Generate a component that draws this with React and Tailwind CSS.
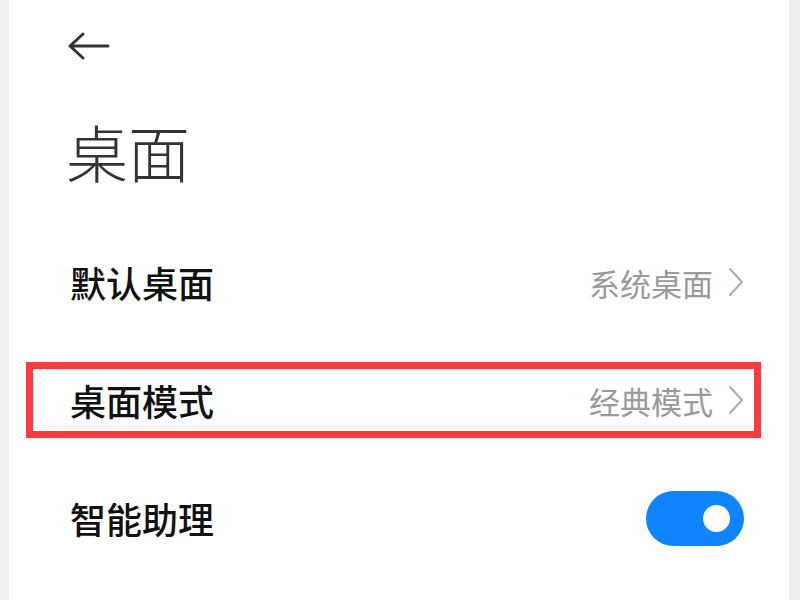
import React, { useState } from 'react';

const cjk = { fontFamily: '"Noto Sans CJK SC", "Noto Sans", sans-serif' };

function Chevron() {
  return (
    <svg width="16" height="30" viewBox="0 0 16 30" className="ml-[15px]">
      <polyline points="2,2 14,15 2,28" fill="none" stroke="#ababab" strokeWidth="2" strokeLinecap="round" strokeLinejoin="round" />
    </svg>
  );
}

function Row({ label, value, marked, children }) {
  return (
    <div
      className={
        'ml-[17px] w-[735px] h-[76px] flex items-center justify-between pl-[37px] pr-[10px] border-[7px] ' +
        (marked ? 'border-[#fb3b3d]' : 'border-transparent')
      }
    >
      <span className="text-[36px] leading-none font-medium text-[#111]">{label}</span>
      {children ? children : (
        <div className="flex items-center">
          <span className="text-[31px] leading-none text-[#9a9a9a]">{value}</span>
          <Chevron />
        </div>
      )}
    </div>
  );
}

export default function App() {
  const [on, setOn] = useState(true);

  return (
    <div className="w-[800px] h-[600px] flex overflow-hidden bg-white" style={cjk}>
      <div className="w-[9px] bg-[#f0f0f0]" />
      <div className="flex-1 flex flex-col bg-white">
        <div className="pt-[32px] pl-[59px]">
          <svg width="42" height="28" viewBox="0 0 42 28">
            <path d="M2 14 H40 M15 2 L2 14 L15 26" fill="none" stroke="#333" strokeWidth="3" strokeLinecap="round" strokeLinejoin="round" />
          </svg>
        </div>
        <div className="mt-[60px] pl-[57px] text-[62px] leading-none font-light text-[#333]">桌面</div>
        <div className="mt-[62px] flex flex-col gap-[42px]">
          <Row label="默认桌面" value="系统桌面" />
          <Row label="桌面模式" value="经典模式" marked />
          <Row label="智能助理">
            <button
              onClick={() => setOn(!on)}
              className={'w-[98px] h-[55px] rounded-full flex items-center px-[14px] ' + (on ? 'bg-[#0f84fd] justify-end' : 'bg-[#ddd] justify-start')}
            >
              <span className="w-[27px] h-[27px] rounded-full bg-white" />
            </button>
          </Row>
        </div>
      </div>
      <div className="w-[11px] bg-[#eeeeee]" />
    </div>
  );
}
